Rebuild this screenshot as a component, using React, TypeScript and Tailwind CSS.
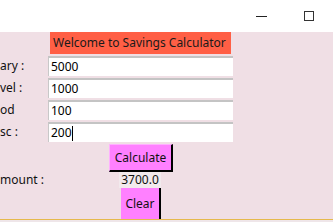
import React from "react";

const font = { fontFamily: '"Noto Sans", "Open Sans", sans-serif' };

function Entry({ value, caret }: { value: string; caret?: boolean }) {
  return (
    <div className="h-[20px] w-[185px] bg-white border-t-2 border-l border-t-[#c4c4c4] border-l-[#c8c8c8] flex items-center pl-[2px] text-[12px] text-black leading-none">
      <span>{value}</span>
      {caret && <span className="inline-block w-[1px] h-[15px] bg-black" />}
    </div>
  );
}

function Row({ label, value, caret }: { label: string; value: string; caret?: boolean }) {
  return (
    <div className="flex items-center h-[20px]">
      <div className="w-[48px] text-[12px] text-[#111] leading-none whitespace-nowrap">{label}</div>
      <Entry value={value} caret={caret} />
    </div>
  );
}

export default function App() {
  return (
    <div className="w-[333px] h-[222px] overflow-hidden flex flex-col" style={font}>
      <div className="h-[32px] bg-white flex items-center justify-end shrink-0">
        <div className="w-[11px] h-[1px] bg-[#222] mr-[37px]" />
        <div className="w-[10px] h-[10px] border border-[#333] mr-[19px]" />
      </div>
      <div className="flex-1 bg-[#f0dfe5] flex flex-col">
        <div className="ml-[50px] w-[181px] h-[22px] bg-[#ff5f45] flex items-center pl-[3px] text-[12px] text-[#1a1a1a] leading-none whitespace-nowrap">
          Welcome to Savings Calculator
        </div>
        <div className="flex flex-col gap-[2px] mt-[2px]">
          <Row label="ary :" value="5000" />
          <Row label="vel :" value="1000" />
          <Row label="od" value="100" />
          <Row label="sc :" value="200" caret />
        </div>
        <div className="ml-[109px] mt-[2px] w-[64px] h-[28px] bg-[#ff80ff] border-r-2 border-b-2 border-r-black border-b-black border-t border-l border-t-[#ffb0ff] border-l-[#ffb0ff] flex items-center justify-center text-[12px] text-[#111] leading-none">
          Calculate
        </div>
        <div className="flex items-center h-[16px]">
          <div className="w-[119px] text-[12px] text-[#111] leading-none">mount :</div>
          <div className="w-[42px] h-[16px] bg-[#f2eaed] flex items-center justify-center text-[12px] text-[#111] leading-none">3700.0</div>
        </div>
        <div className="ml-[121px] w-[40px] h-[31px] bg-[#ff80ff] border-r-2 border-r-black flex items-center justify-center text-[12px] text-[#111] leading-none">
          Clear
        </div>
      </div>
      <div className="h-[1px] bg-[#e6b94c] shrink-0" />
      <div className="h-[2px] bg-[#efe6e9] shrink-0" />
    </div>
  );
}
